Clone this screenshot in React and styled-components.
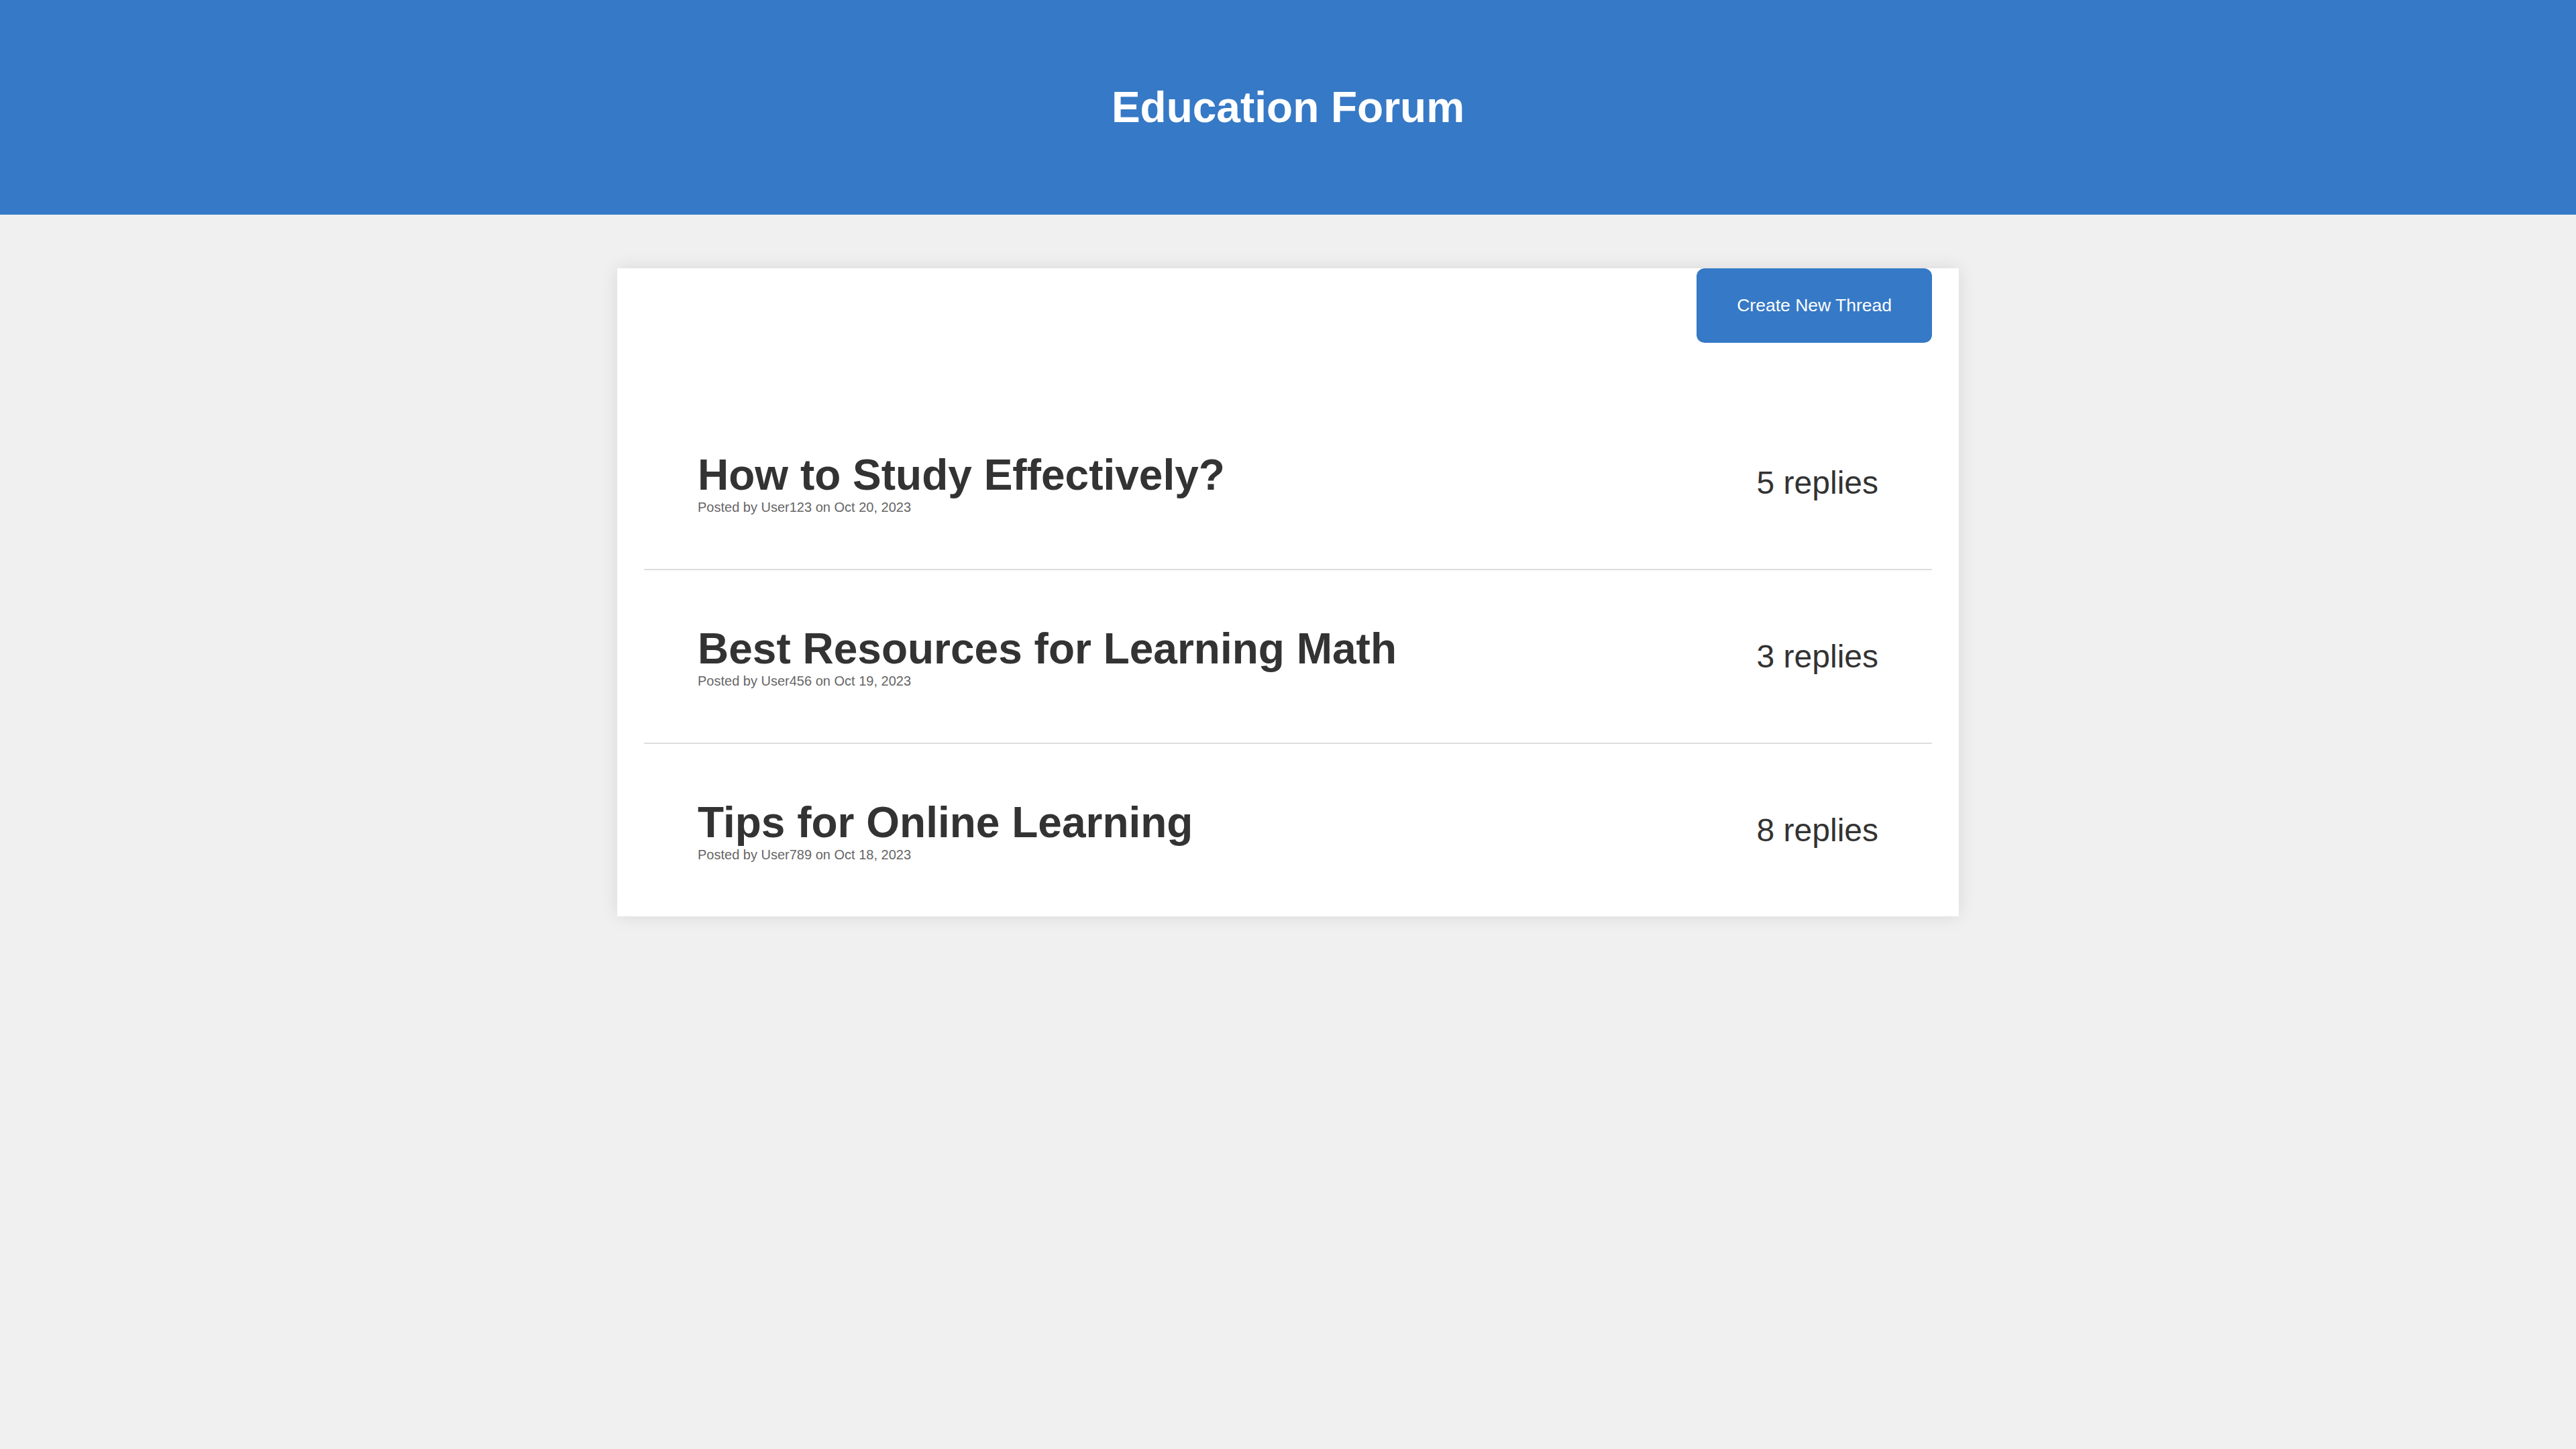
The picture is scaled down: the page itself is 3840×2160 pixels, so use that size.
import React from 'react'
import styled, { createGlobalStyle } from 'styled-components'

const GlobalStyle = createGlobalStyle`
  body {
    margin: 0;
    background: #f0f0f0;
    font-family: "Liberation Sans", Arial, sans-serif;
    color: #333;
  }
`;

const Header = styled.header`
  background: #3679c6;
  color: #fff;
  padding: 123px 0 123px;
  text-align: center;
`;

const Title = styled.h1`
  margin: 0;
  font-size: 64px;
  font-weight: bold;
`;

const Panel = styled.main`
  width: 2000px;
  margin: 80px auto;
  box-sizing: border-box;
  padding: 0 40px;
  background: #fff;
  box-shadow: 0 0 25px rgba(0, 0, 0, 0.1);
`;

const Toolbar = styled.div`
  display: flex;
  justify-content: flex-end;
`;

const NewThreadButton = styled.button`
  background: #3679c6;
  color: #fff;
  border: none;
  border-radius: 12px;
  padding: 40px 60px;
  font-family: "Liberation Sans", Arial, sans-serif;
  font-size: 26.5px;
  cursor: pointer;
`;

const ThreadList = styled.ul`
  list-style: none;
  margin: 80px 0 0;
  padding: 0;
`;

const ThreadRow = styled.li`
  display: flex;
  justify-content: space-between;
  align-items: center;
  padding: 80px;
  border-bottom: 2.5px solid #ddd;
  &:last-child {
    border-bottom: none;
  }
`;

const ThreadTitle = styled.h2`
  margin: 0;
  font-size: 64px;
  font-weight: bold;
  color: #333;
`;

const Meta = styled.div`
  font-size: 20px;
  color: #666;
`;

const Replies = styled.span`
  font-size: 48px;
  color: #333;
`;

const threads = [
  { id: 1, title: 'How to Study Effectively?', author: 'User123', date: 'Oct 20, 2023', replies: 5 },
  { id: 2, title: 'Best Resources for Learning Math', author: 'User456', date: 'Oct 19, 2023', replies: 3 },
  { id: 3, title: 'Tips for Online Learning', author: 'User789', date: 'Oct 18, 2023', replies: 8 },
];

export default function App() {
  return (
    <>
      <GlobalStyle />
      <Header>
        <Title>Education Forum</Title>
      </Header>
      <Panel>
        <Toolbar>
          <NewThreadButton>Create New Thread</NewThreadButton>
        </Toolbar>
        <ThreadList>
          {threads.map((t) => (
            <ThreadRow key={t.id}>
              <div>
                <ThreadTitle>{t.title}</ThreadTitle>
                <Meta>Posted by {t.author} on {t.date}</Meta>
              </div>
              <Replies>{t.replies} replies</Replies>
            </ThreadRow>
          ))}
        </ThreadList>
      </Panel>
    </>
  )
}
